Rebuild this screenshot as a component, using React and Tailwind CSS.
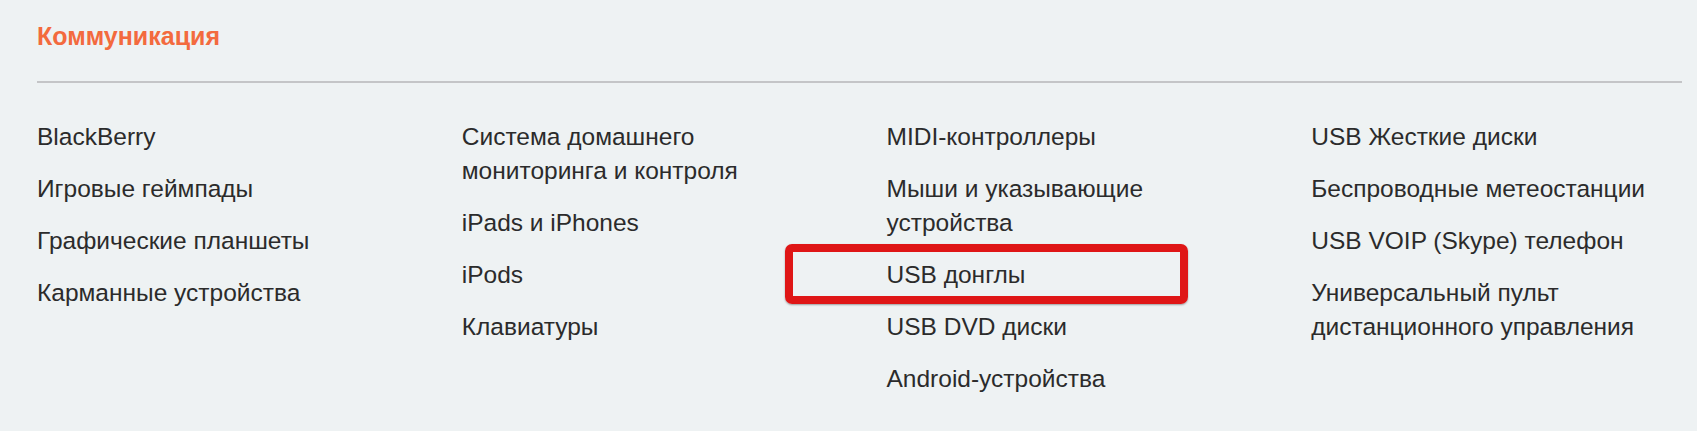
import React from "react";

const columns = [
  ["BlackBerry", "Игровые геймпады", "Графические планшеты", "Карманные устройства"],
  ["Система домашнего мониторинга и контроля", "iPads и iPhones", "iPods", "Клавиатуры"],
  [
    "MIDI-контроллеры",
    "Мыши и указывающие устройства",
    "USB донглы",
    "USB DVD диски",
    "Android-устройства",
  ],
  [
    "USB Жесткие диски",
    "Беспроводные метеостанции",
    "USB VOIP (Skype) телефон",
    "Универсальный пульт дистанционного управления",
  ],
];

// the highlighted item gets the red annotation frame
const HIGHLIGHT = "USB донглы";

const App = () => {
  return (
    <div
      className="min-h-[431px] bg-[#eef2f3] pl-[37px] pr-[15px] pt-[20px]"
      style={{ fontFamily: '"Liberation Sans", Arial, sans-serif' }}
    >
      {/* Section title */}
      <h2 className="text-[25px] leading-[33px] font-bold text-[#f36a3e]">Коммуникация</h2>

      <div className="mt-[28px] h-[2px] bg-[#c4c5c7]"></div>

      {/* Link columns */}
      <div className="mt-[37px] grid grid-cols-4 gap-x-[54px]">
        {columns.map((items, i) => (
          <ul key={i} className="flex flex-col gap-y-[18px]">
            {items.map((item) => (
              <li key={item} className="relative text-[24.5px] leading-[34px] text-[#2b2b2b]">
                {item}
                {item === HIGHLIGHT && (
                  <div className="absolute -left-[102px] -top-[14px] w-[403px] h-[60px] border-[8px] border-[#df1616] rounded-[7px] shadow-[0_1px_2px_rgba(0,0,0,0.35)]"></div>
                )}
              </li>
            ))}
          </ul>
        ))}
      </div>
    </div>
  );
};

export default App;
